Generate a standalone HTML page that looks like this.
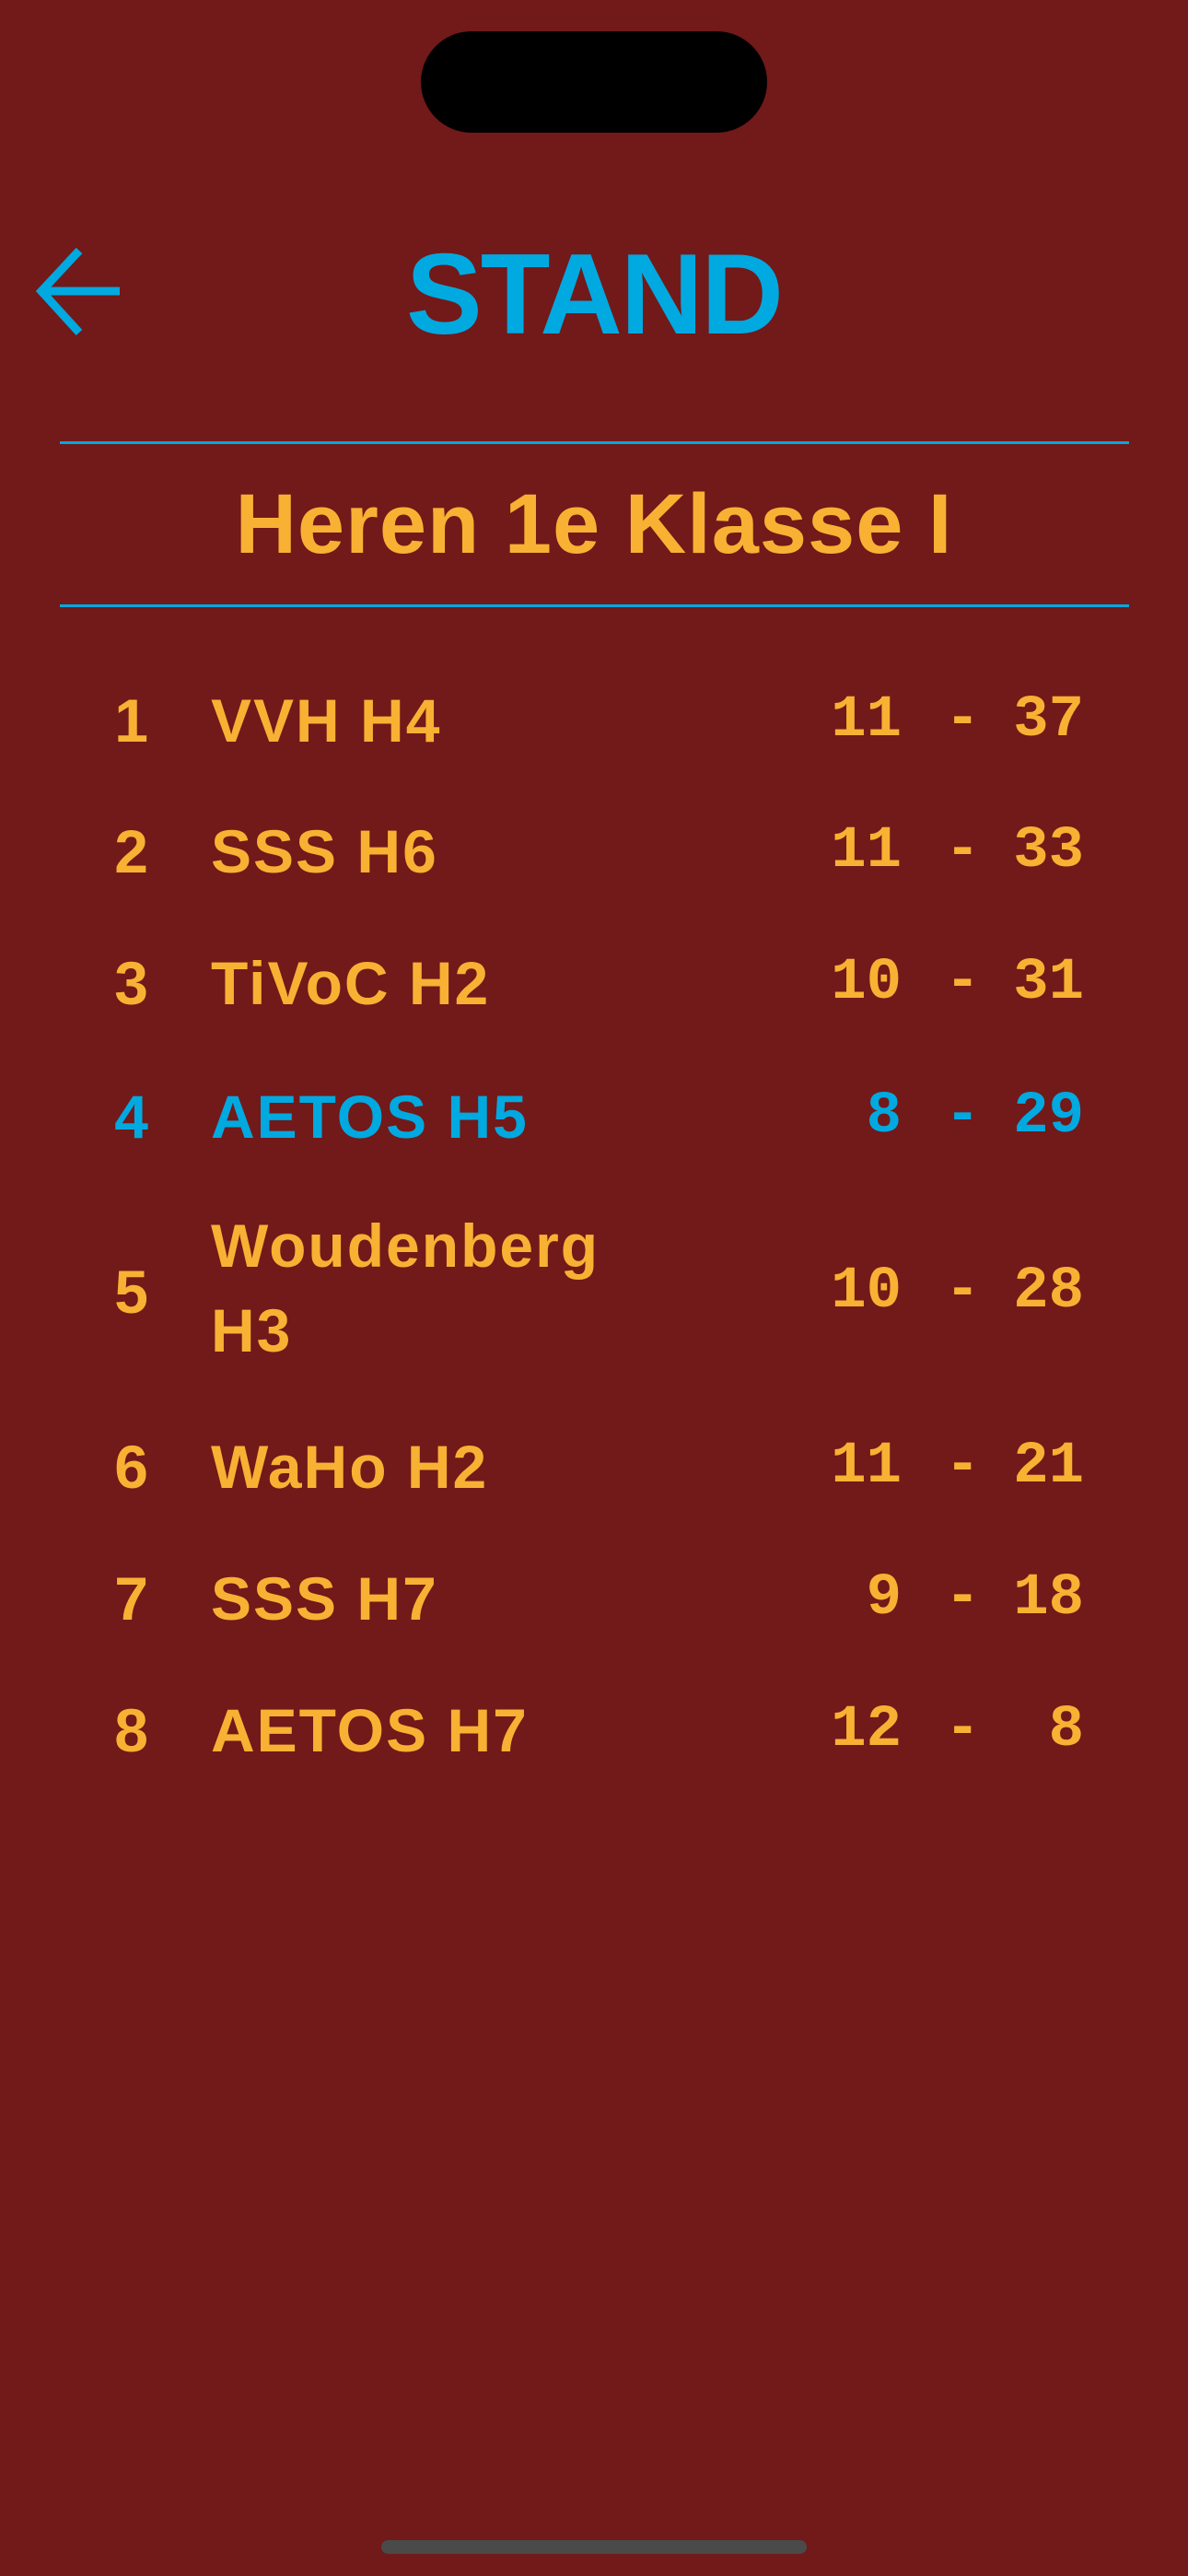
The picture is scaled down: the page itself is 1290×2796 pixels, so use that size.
<!DOCTYPE html>
<html><head><meta charset="utf-8"><style>
html,body{margin:0;padding:0}
body{width:1290px;height:2796px;background:#721919;position:relative;overflow:hidden;font-family:"Liberation Sans",sans-serif;font-weight:bold}
.a{position:absolute}
.island{left:457px;top:34px;width:376px;height:110px;background:#000;border-radius:55px}
.title{left:0;width:1290px;top:245px;line-height:150px;font-size:124px;text-align:center;color:#00a9e0;letter-spacing:-2px}
.line{left:65px;width:1161px;height:3px;background:#00a9e0}
.head{left:0;width:1290px;top:509px;line-height:120px;font-size:92px;text-align:center;color:#f8b133;letter-spacing:1px}
.row{position:absolute;left:0;width:1290px;height:100px;color:#f8b133;font-size:66px}
.row.blue{color:#00a9e0}
.rk{position:absolute;right:1129px;top:0;line-height:100px}
.nm{position:absolute;left:229px;top:0;line-height:100px;letter-spacing:2px}
.s{position:absolute;top:0;line-height:100px;font-family:"Liberation Mono",monospace;font-size:64px}
.s1{right:311px;text-align:right}
.d{left:1026px}
.s2{right:113px;text-align:right}
.ind{left:414px;top:2757px;width:462px;height:15px;background:#4a4a4a;border-radius:8px}
</style></head><body>
<div class="a island"></div>
<svg class="a" style="left:36px;top:268px" width="100" height="100" viewBox="0 0 100 100"><path d="M94 48 H12 M50 4 L9 48 L50 93" fill="none" stroke="#00a9e0" stroke-width="9"/></svg>
<div class="a title">STAND</div>
<div class="a line" style="top:479px"></div>
<div class="a head">Heren 1e Klasse I</div>
<div class="a line" style="top:656px"></div>

<div class="row" style="top:732px"><span class="rk">1</span><span class="nm">VVH H4</span><span class="s s1">11</span><span class="s d">-</span><span class="s s2">37</span></div>
<div class="row" style="top:874px"><span class="rk">2</span><span class="nm">SSS H6</span><span class="s s1">11</span><span class="s d">-</span><span class="s s2">33</span></div>
<div class="row" style="top:1017px"><span class="rk">3</span><span class="nm">TiVoC H2</span><span class="s s1">10</span><span class="s d">-</span><span class="s s2">31</span></div>
<div class="row blue" style="top:1162px"><span class="rk">4</span><span class="nm">AETOS H5</span><span class="s s1">8</span><span class="s d">-</span><span class="s s2">29</span></div>
<div class="row" style="top:1352px"><span class="rk">5</span><span class="nm" style="top:-46px;line-height:92px">Woudenberg<br>H3</span><span class="s s1">10</span><span class="s d">-</span><span class="s s2">28</span></div>
<div class="row" style="top:1542px"><span class="rk">6</span><span class="nm">WaHo H2</span><span class="s s1">11</span><span class="s d">-</span><span class="s s2">21</span></div>
<div class="row" style="top:1685px"><span class="rk">7</span><span class="nm">SSS H7</span><span class="s s1">9</span><span class="s d">-</span><span class="s s2">18</span></div>
<div class="row" style="top:1828px"><span class="rk">8</span><span class="nm">AETOS H7</span><span class="s s1">12</span><span class="s d">-</span><span class="s s2">8</span></div>

<div class="a ind"></div>
</body></html>
